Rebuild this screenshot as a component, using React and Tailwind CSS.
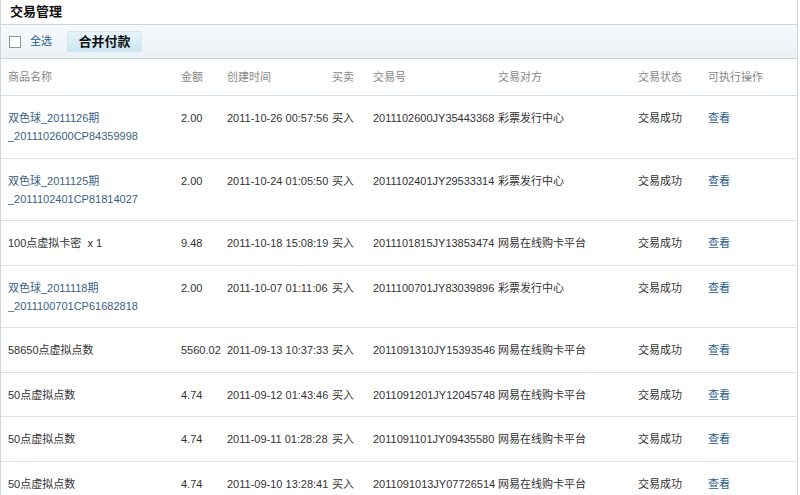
import React from 'react';

const rows = [
  { name: ['双色球_2011126期', '_2011102600CP84359998'], link: true, amount: '2.00', time: '2011-10-26 00:57:56', no: '2011102600JY35443368', party: '彩票发行中心' },
  { name: ['双色球_2011125期', '_2011102401CP81814027'], link: true, amount: '2.00', time: '2011-10-24 01:05:50', no: '2011102401JY29533314', party: '彩票发行中心' },
  { name: ['100点虚拟卡密  x 1'], amount: '9.48', time: '2011-10-18 15:08:19', no: '2011101815JY13853474', party: '网易在线购卡平台' },
  { name: ['双色球_2011118期', '_2011100701CP61682818'], link: true, amount: '2.00', time: '2011-10-07 01:11:06', no: '2011100701JY83039896', party: '彩票发行中心' },
  { name: ['58650点虚拟点数'], amount: '5560.02', time: '2011-09-13 10:37:33', no: '2011091310JY15393546', party: '网易在线购卡平台' },
  { name: ['50点虚拟点数'], amount: '4.74', time: '2011-09-12 01:43:46', no: '2011091201JY12045748', party: '网易在线购卡平台' },
  { name: ['50点虚拟点数'], amount: '4.74', time: '2011-09-11 01:28:28', no: '2011091101JY09435580', party: '网易在线购卡平台' },
  { name: ['50点虚拟点数'], amount: '4.74', time: '2011-09-10 13:28:41', no: '2011091013JY07726514', party: '网易在线购卡平台' },
];

const cols = 'grid grid-cols-[180px_46px_105px_41px_125px_140px_70px_1fr]';

export default function App() {
  return (
    <div
      className="w-[798px] h-[495px] overflow-hidden bg-white border-l border-r border-[#cfd6dc] text-[11px] text-[#333]"
      style={{ fontFamily: '"Liberation Sans", Arial, "Noto Sans CJK SC", sans-serif' }}
    >
      {/* title */}
      <div className="h-[25px] flex items-center pl-[9px] border-b border-[#cdd5db]">
        <span className="font-bold text-[13px] text-[#111]">交易管理</span>
      </div>

      {/* toolbar */}
      <div className="h-[34px] flex items-center pl-[8px] border-b border-[#cbd5dc] bg-gradient-to-b from-[#f7fafc] to-[#eaf1f6]">
        <span className="w-[12px] h-[12px] border border-[#8f9499] bg-white" />
        <span className="ml-[9px] text-[#2a5d8f]">全选</span>
        <button className="ml-[15px] w-[75px] h-[21px] bg-gradient-to-b from-[#e6f4f9] to-[#c9e6f1] border border-[#d7e6ee] font-bold text-[13px] text-[#111] leading-none">
          合并付款
        </button>
      </div>

      {/* header */}
      <div className={`${cols} h-[37px] items-center text-[#888] border-b border-[#d3dde5]`}>
        <div className="pl-[7px]">商品名称</div>
        <div>金额</div>
        <div>创建时间</div>
        <div>买卖</div>
        <div>交易号</div>
        <div>交易对方</div>
        <div>交易状态</div>
        <div>可执行操作</div>
      </div>

      {rows.map((r, i) => (
        <div key={i} className={`${cols} pt-[13px] pb-[12.5px] leading-[18px] border-b border-[#dde1e4]`}>
          <div className={`pl-[7px] whitespace-pre ${r.link ? 'text-[#3a5f86]' : ''}`}>
            {r.name.map((n, j) => (
              <div key={j}>{n}</div>
            ))}
          </div>
          <div>{r.amount}</div>
          <div className="whitespace-nowrap">{r.time}</div>
          <div>买入</div>
          <div className="whitespace-nowrap">{r.no}</div>
          <div>{r.party}</div>
          <div>交易成功</div>
          <div className="text-[#2a5d8f]">查看</div>
        </div>
      ))}
    </div>
  );
}
